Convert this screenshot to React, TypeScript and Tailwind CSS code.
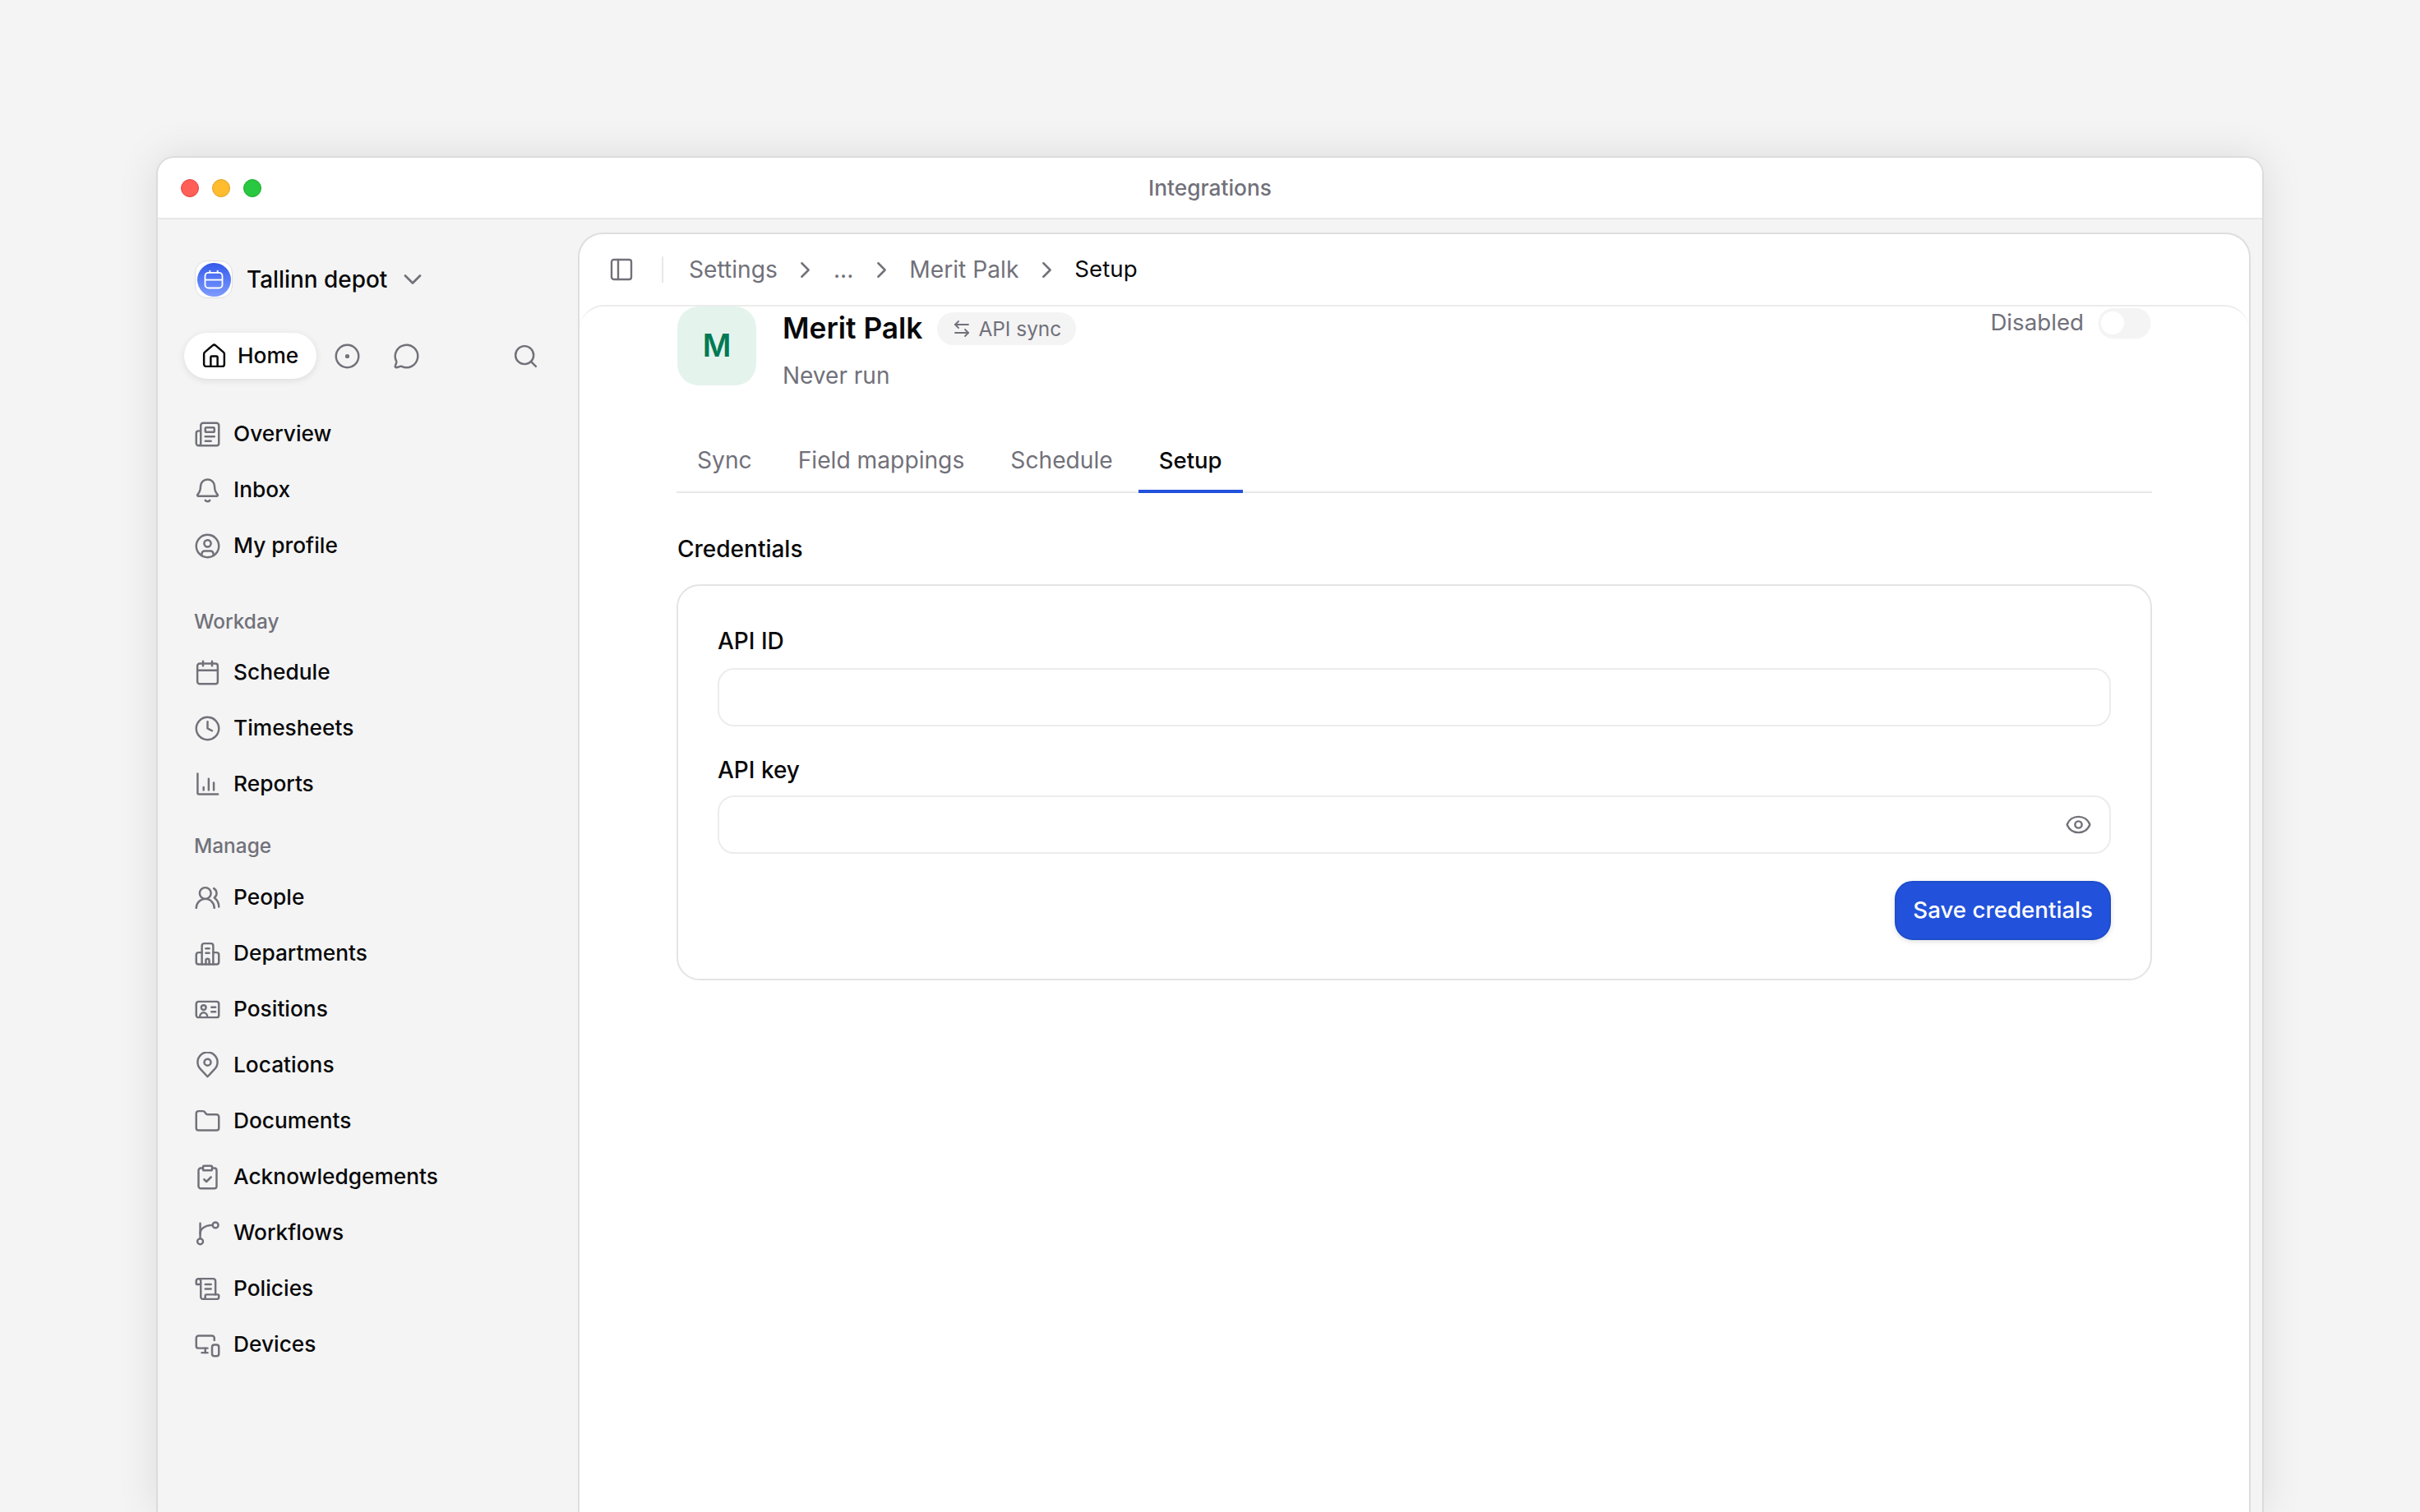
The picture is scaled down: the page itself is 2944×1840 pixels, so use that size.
import React from 'react';
import {
  Newspaper,
  Calendar,
  Clock,
  UsersRound,
  Folder,
  ClipboardCheck,
  ScrollText,
  MonitorSmartphone,
  House,
  CircleDot,
  MessageCircle,
  Search,
  ChevronDown,
  ChevronRight,
  PanelLeft,
  ArrowLeftRight,
  Eye,
} from 'lucide-react';

type IconProps = { className?: string; strokeWidth?: number };

const Svg = ({ className, children }: IconProps & { children: React.ReactNode }) => (
  <svg
    viewBox="0 0 24 24"
    fill="none"
    stroke="currentColor"
    strokeWidth={1.8}
    strokeLinecap="round"
    strokeLinejoin="round"
    className={className}
  >
    {children}
  </svg>
);

const BellIcon = ({ className }: IconProps) => (
  <Svg className={className}>
    <path d="M12 2.5a6.2 6.2 0 0 0-6.2 6.2c0 3.8-1.4 5.8-2.6 7.2-.5.6 0 1.4.7 1.4h16.2c.7 0 1.2-.8.7-1.4-1.2-1.4-2.6-3.4-2.6-7.2A6.2 6.2 0 0 0 12 2.5Z" />
    <path d="M10 21c.5.6 1.2 1 2 1s1.5-.4 2-1" />
  </Svg>
);

const ProfileIcon = ({ className }: IconProps) => (
  <Svg className={className}>
    <circle cx="12" cy="12" r="10" />
    <circle cx="12" cy="9.7" r="3" />
    <path d="M6.8 19.5c0-2.2 1.3-3.2 2.8-3.2h4.8c1.5 0 2.8 1 2.8 3.2" />
  </Svg>
);

const ReportsIcon = ({ className }: IconProps) => (
  <Svg className={className}>
    <path d="M3.2 2.5v17.3a1 1 0 0 0 1 1h17" />
    <path d="M8.5 14.5v2.5" />
    <path d="M13 7V17" />
    <path d="M17.5 10.5V17" />
  </Svg>
);

const BuildingIcon = ({ className }: IconProps) => (
  <Svg className={className}>
    <path d="M7 21.5V5a2 2 0 0 1 2-2h6a2 2 0 0 1 2 2v16.5" />
    <path d="M7 11H4a2 2 0 0 0-2 2v6.5a2 2 0 0 0 2 2h16a2 2 0 0 0 2-2V13a2 2 0 0 0-2-2h-3" />
    <path d="M10.5 7.5h3" />
    <path d="M10.5 11.5h3" />
    <path d="M10.5 21.5V18a1.5 1.5 0 0 1 3 0v3.5" />
  </Svg>
);

const IdCardIcon = ({ className }: IconProps) => (
  <Svg className={className}>
    <rect x="2" y="5" width="20" height="14" rx="2" />
    <circle cx="8.5" cy="10.2" r="2.1" />
    <path d="M5.2 18.5c0-2.2 1.4-3.7 3.3-3.7s3.3 1.5 3.3 3.7" />
    <path d="M15.5 10h3.5" />
    <path d="M15.5 14h3.5" />
  </Svg>
);

const PinIcon = ({ className }: IconProps) => (
  <Svg className={className}>
    <path d="M12 22l-6.2-6.6a8.8 8.8 0 1 1 12.4 0Z" />
    <circle cx="12" cy="9.2" r="2.9" />
  </Svg>
);

const WorkflowIcon = ({ className }: IconProps) => (
  <Svg className={className}>
    <circle cx="5.5" cy="19.5" r="2.5" />
    <circle cx="19" cy="5" r="2.5" />
    <path d="M5.5 17V3.5" />
    <path d="M5.5 12.5c0-4.5 4.5-7.5 11-7.5" />
  </Svg>
);

const sw = 1.8;

const topItems = [
  { label: 'Overview', icon: Newspaper },
  { label: 'Inbox', icon: BellIcon },
  { label: 'My profile', icon: ProfileIcon },
];

const workdayItems = [
  { label: 'Schedule', icon: Calendar },
  { label: 'Timesheets', icon: Clock },
  { label: 'Reports', icon: ReportsIcon },
];

const manageItems = [
  { label: 'People', icon: UsersRound },
  { label: 'Departments', icon: BuildingIcon },
  { label: 'Positions', icon: IdCardIcon },
  { label: 'Locations', icon: PinIcon },
  { label: 'Documents', icon: Folder },
  { label: 'Acknowledgements', icon: ClipboardCheck },
  { label: 'Workflows', icon: WorkflowIcon },
  { label: 'Policies', icon: ScrollText },
  { label: 'Devices', icon: MonitorSmartphone },
];

const NavRows = ({ items }: { items: { label: string; icon: React.ComponentType<IconProps> }[] }) => (
  <>
    {items.map((item) => (
      <div key={item.label} className="flex h-[68px] items-center gap-[15px] pl-[44px]">
        <item.icon className="h-[33px] w-[33px] shrink-0 text-[#71717a]" strokeWidth={sw} />
        <span className="text-[26.3px] font-medium text-[#09090b]">{item.label}</span>
      </div>
    ))}
  </>
);

const Crumb = () => <ChevronRight className="h-[33px] w-[33px] text-[#71717a]" strokeWidth={sw} />;

const tabs = ['Sync', 'Field mappings', 'Schedule', 'Setup'];

const App = () => {
  return (
    <div className="flex h-screen flex-col overflow-hidden bg-[#f4f4f4] px-[190px] pt-[190px] font-[Inter,sans-serif]">
      <div className="flex flex-1 flex-col overflow-hidden rounded-t-[22px] border-x-2 border-t-2 border-[#dcdcdc] bg-[#f4f4f4] shadow-[0_0_50px_rgba(0,0,0,0.1)]">
        {/* Title bar */}
        <div className="grid h-[75px] shrink-0 grid-cols-[1fr_auto_1fr] items-center border-b-2 border-[#e8e8e8] bg-white">
          <div className="flex gap-[16px] pl-[28px]">
            <span className="h-[22px] w-[22px] rounded-full border border-[#e0443e] bg-[#ff5f57]" />
            <span className="h-[22px] w-[22px] rounded-full border border-[#dea123] bg-[#febc2e]" />
            <span className="h-[22px] w-[22px] rounded-full border border-[#1aab29] bg-[#28c840]" />
          </div>
          <span className="text-[26.3px] font-medium text-[#71717a]">Integrations</span>
          <div />
        </div>

        <div className="flex min-h-0 flex-1">
          {/* Sidebar */}
          <aside className="w-[511px] shrink-0">
            <div className="flex items-center pl-[45px] pt-[50px]">
              <div className="flex h-[46px] w-[46px] items-center justify-center rounded-[15px] border border-[#dedede] bg-white">
                <div className="flex h-[41px] w-[41px] items-center justify-center rounded-full bg-gradient-to-b from-[#3458ea] to-[#7f9bff]">
                  <svg viewBox="0 0 24 24" fill="none" stroke="white" strokeWidth={1.6} className="h-[28px] w-[28px]">
                    <rect x="3" y="5" width="18" height="16" rx="3.5" />
                    <path d="M3 12.5h18" />
                    <path d="M8 2.5v3" />
                    <path d="M16 2.5v3" />
                  </svg>
                </div>
              </div>
              <span className="ml-[17px] mt-[1px] text-[27.9px] font-medium text-[#09090b]">Tallinn depot</span>
              <ChevronDown className="ml-[13px] h-[36px] w-[36px] text-[#71717a]" strokeWidth={sw} />
            </div>

            <div className="mt-[42px] flex items-center pl-[32px]">
              <div className="flex h-[56px] w-[161px] items-center gap-[12px] rounded-full bg-white pl-[20px] shadow-[0_2px_8px_rgba(0,0,0,0.1)]">
                <House className="h-[33px] w-[33px] text-[#09090b]" strokeWidth={sw} />
                <span className="text-[26.3px] font-medium text-[#09090b]">Home</span>
              </div>
              <CircleDot className="ml-[21px] h-[33px] w-[33px] text-[#71717a]" strokeWidth={sw} />
              <MessageCircle className="ml-[39px] h-[33px] w-[33px] text-[#71717a]" strokeWidth={sw} />
              <Search className="ml-[112px] h-[33px] w-[33px] text-[#71717a]" strokeWidth={sw} />
            </div>

            <div className="mt-[33px]">
              <NavRows items={topItems} />
            </div>

            <div className="mt-[36px] flex h-[44px] items-center pl-[44px] text-[24.4px] font-medium text-[#71717a]">
              Workday
            </div>
            <div className="mt-[6px]">
              <NavRows items={workdayItems} />
            </div>

            <div className="mt-[19px] flex h-[44px] items-center pl-[44px] text-[24.4px] font-medium text-[#71717a]">
              Manage
            </div>
            <div className="mt-[7px]">
              <NavRows items={manageItems} />
            </div>
          </aside>

          {/* Main panel */}
          <main className="mr-[14px] mt-[16px] flex min-w-0 flex-1 flex-col rounded-t-[30px] border-x-2 border-t-2 border-[#dedede] bg-white">
            <div className="flex h-[86px] shrink-0 items-center gap-[17.5px] pl-[35px] text-[28.2px]">
              <PanelLeft className="h-[32px] w-[32px] text-[#71717a]" strokeWidth={sw} />
              <span className="ml-[15.5px] h-[32px] w-[2px] bg-[#e8e8e8]" />
              <span className="ml-[13.5px] text-[#71717a]">Settings</span>
              <Crumb />
              <span className="text-[#71717a]">...</span>
              <Crumb />
              <span className="text-[#71717a]">Merit Palk</span>
              <Crumb />
              <span className="text-[27.7px] text-[#09090b]">Setup</span>
            </div>

            <div className="min-h-0 flex-1 rounded-t-[30px] border-t-2 border-[#ececec] pl-[118px] pr-[118px]">
              <div className="flex items-start justify-between">
                <div className="ml-[1px] flex">
                  <div className="flex h-[96px] w-[96px] items-center justify-center rounded-[26px] bg-[#e5f3ed] text-[37.6px] font-semibold text-[#007a55]">
                    M
                  </div>
                  <div className="ml-[32px]">
                    <div className="flex h-[54px] items-center gap-[18px]">
                      <span className="text-[35.3px] font-semibold text-[#09090b]">Merit Palk</span>
                      <span className="flex h-[40px] items-center gap-[8px] rounded-full bg-[#f4f4f5] px-[18px] text-[24.4px] text-[#71717a]">
                        <ArrowLeftRight className="h-[24px] w-[24px]" strokeWidth={sw} />
                        API sync
                      </span>
                    </div>
                    <div className="mt-[10px] text-[28px] leading-[40px] text-[#71717a]">Never run</div>
                  </div>
                </div>
                <div className="-mt-[1px] mr-[2px] flex items-center gap-[18px]">
                  <span className="text-[27.7px] text-[#71717a]">Disabled</span>
                  <div className="flex h-[36px] w-[63px] items-center rounded-full bg-[#f4f4f5] px-[3px] shadow-[0_1px_2px_rgba(0,0,0,0.06)]">
                    <span className="h-[28px] w-[28px] rounded-full bg-white" />
                  </div>
                </div>
              </div>

              <div className="mt-[51px] flex gap-[6px] border-b-2 border-[#e8e8e8]">
                {tabs.map((tab) => (
                  <div
                    key={tab}
                    className={
                      tab === 'Setup'
                        ? '-mb-[2px] flex h-[72px] items-center border-b-4 border-[#2252db] px-[25px] pb-[2px] text-[27.5px] font-medium text-[#09090b]'
                        : 'flex h-[70px] items-center px-[25px] pb-[6px] text-[28.2px] text-[#71717a]'
                    }
                  >
                    {tab}
                  </div>
                ))}
              </div>

              <div className="mt-[48px] pl-[1px] text-[28px] font-medium leading-[40px] text-[#09090b]">Credentials</div>

              <div className="mt-[23px] rounded-[28px] border-2 border-[#e4e4e4] px-[48px] pb-[47px] pt-[47px]">
                <label className="block text-[28px] font-medium leading-[40px] text-[#09090b]">API ID</label>
                <input className="mt-[13px] block h-[71px] w-full rounded-[20px] border-2 border-[#ececec] bg-white outline-none" />

                <label className="mt-[33px] block text-[28px] font-medium leading-[40px] text-[#09090b]">API key</label>
                <div className="mt-[11px] flex h-[71px] items-center rounded-[20px] border-2 border-[#ececec] bg-white pr-[21px]">
                  <input className="h-full min-w-0 flex-1 bg-transparent outline-none" />
                  <Eye className="h-[33px] w-[33px] text-[#71717a]" strokeWidth={sw} />
                </div>

                <div className="mt-[33px] flex justify-end">
                  <button className="h-[72px] rounded-[22px] border-2 border-[#1e4dcb] bg-[#2252db] px-[20px] text-[27.7px] font-medium text-white shadow-[0_2px_6px_rgba(0,0,0,0.12)]">
                    Save credentials
                  </button>
                </div>
              </div>
            </div>
          </main>
        </div>
      </div>
    </div>
  );
};

export default App;
